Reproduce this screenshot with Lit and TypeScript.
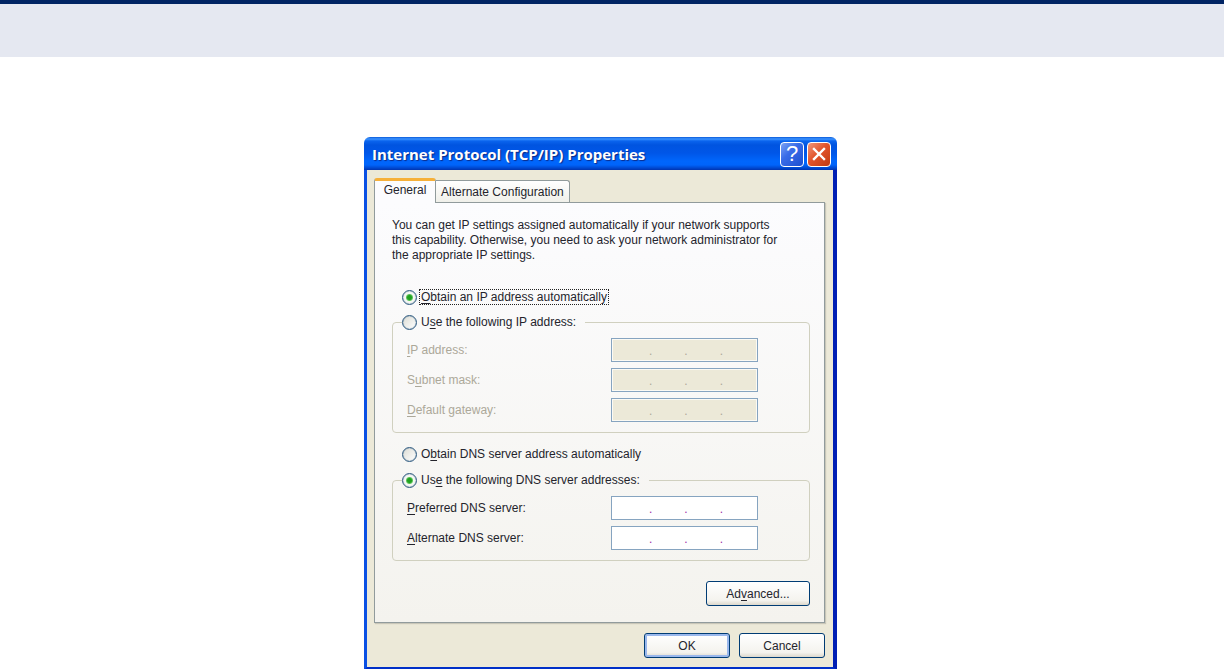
import { LitElement, html, css } from "lit";
import { customElement, property } from "lit/decorators.js";

const FONT = css`"Liberation Sans", Arial, sans-serif`;

/** Four-part address box with dots between the octets. */
@customElement("ip-field")
class IpField extends LitElement {
  @property() name = "";
  @property({ type: Boolean }) disabled = false;

  static styles = css`
    :host {
      display: block;
    }
    .box {
      box-sizing: border-box;
      display: flex;
      align-items: center;
      width: 147px;
      height: 24px;
      padding: 2px 2px 0 5px;
      border: 1px solid #86a4c0;
      background: #fff;
      color: #a030a8;
      font: 12px/16px ${FONT};
    }
    .box.off {
      background: #ece9d8;
      box-shadow: inset 0 0 0 1px #fbfaf4;
      color: #aca899;
    }
    .octet {
      flex: 1;
      min-width: 0;
      box-sizing: border-box;
      height: 16px;
      padding: 0;
      border: 0;
      background: transparent;
      font: inherit;
      color: #222;
      text-align: center;
      outline: none;
    }
  `;

  render() {
    return html`<div class="box ${this.disabled ? "off" : ""}" role="group" aria-label=${this.name}>
      ${[1, 2, 3, 4].map(
        (n) => html`${n > 1 ? html`<span>.</span>` : ""}<input
            class="octet"
            maxlength="3"
            aria-label="${this.name} ${n}"
            ?disabled=${this.disabled}
          />`
      )}
    </div>`;
  }
}

@customElement("app-root")
class AppRoot extends LitElement {
  static styles = css`
    :host {
      display: block;
      background: #fff;
      color: #24242c;
      font: 12px/16px ${FONT};
    }
    .banner {
      height: 53px;
      border-top: 4px solid #002464;
      background: #e5e8f1;
    }
    main {
      display: flex;
      justify-content: center;
      padding: 80px 23px 0 0;
    }
    .dialog {
      width: 473px;
      border-radius: 6px 6px 0 0;
      overflow: hidden;
    }
    .titlebar {
      box-sizing: border-box;
      display: flex;
      align-items: center;
      gap: 3px;
      height: 33px;
      padding: 1px 6px 0 8px;
      background: linear-gradient(
        #0a5ad8 0,
        #3c94ff 2px,
        #0a64ee 4px,
        #0054e0 8px,
        #0056e8 16px,
        #0066fc 24px,
        #0064fa 28px,
        #0048d0 31px,
        #0034b0 33px
      );
    }
    h1 {
      flex: 1;
      margin: 0;
      color: #fff;
      font: bold 15px/20px "Open Sans", "Noto Sans", sans-serif;
      text-shadow: 1px 1px 1px #0a2a88;
    }
    .cap {
      box-sizing: border-box;
      display: grid;
      place-items: center;
      width: 24px;
      height: 25px;
      padding: 0;
      border: 1px solid #fff;
      border-radius: 4px;
      color: #fff;
      font: 22px/22px ${FONT};
      background: linear-gradient(135deg, #7ba2f4, #3a6ce8 40%, #1c4fd0);
    }
    .cap.close {
      background: linear-gradient(135deg, #f0977c, #e2542c 45%, #c23a10);
    }
    .body {
      padding: 8px 8px 9px 7px;
      border: solid #0a50e4;
      border-width: 0 4px 3px 3px;
      border-right-color: #001fb4;
      border-bottom-color: #0030c8;
      background: #ece9d8;
    }
    .tabs {
      display: flex;
      align-items: flex-end;
      height: 24px;
    }
    .tab {
      box-sizing: border-box;
      height: 22px;
      padding: 0 5px;
      border: 1px solid #919b9c;
      border-bottom: 0;
      border-left: 0;
      border-radius: 0 3px 0 0;
      background: linear-gradient(#fff, #f0f0ea);
      color: inherit;
      font: inherit;
    }
    .tab.active {
      z-index: 1;
      width: 62px;
      height: 25px;
      margin-bottom: -1px;
      padding: 0 0 5px;
      border-left: 1px solid #919b9c;
      border-top: 3px solid #f6b03a;
      border-radius: 3px 3px 0 0;
      background: #fcfcfe;
    }
    .panel {
      padding: 15px 14px 16px 17px;
      border: 1px solid #919b9c;
      box-shadow: 1px 1px 1px #c8c6b8;
      background: linear-gradient(#fcfcfe, #f4f3ee);
    }
    .intro {
      margin: 0 0 26px;
      line-height: 15px;
    }
    .choice {
      display: flex;
      align-items: center;
      gap: 3px;
      height: 16px;
    }
    .loose {
      padding-left: 10px;
    }
    .choice label {
      padding: 0 1px;
    }
    .choice label.focused {
      line-height: 14px;
      outline: 1px dotted #222;
    }
    input[type="radio"] {
      appearance: none;
      box-sizing: border-box;
      width: 15px;
      height: 15px;
      margin: 0;
      border: 1px solid #2e5a80;
      border-radius: 50%;
      background: linear-gradient(135deg, #dcdcd4, #fff);
      box-shadow: inset 0 0 1px #2e5a80;
    }
    input[type="radio"]:checked {
      background: radial-gradient(circle, #21a121 0 2px, #5cc45a 3px, #f6f8f4 4px);
    }
    fieldset {
      min-width: 0;
      margin: 0;
      padding: 8px 9px 10px;
      border: 1px solid #d0d0bf;
      border-radius: 4px;
    }
    .first {
      margin: 9px 0 13px;
    }
    .second {
      margin: 10px 0 20px;
    }
    legend {
      padding: 0 8px 0 0;
    }
    .fields {
      display: grid;
      grid-template-columns: 204px 147px;
      row-gap: 6px;
      align-items: center;
      padding-left: 5px;
      grid-auto-rows: 24px;
    }
    .off {
      color: #aca899;
    }
    u {
      text-underline-offset: 2px;
    }
    .actions {
      display: flex;
      justify-content: flex-end;
      gap: 9px;
    }
    .push {
      box-sizing: border-box;
      min-width: 86px;
      height: 25px;
      padding: 0 17px;
      border: 1px solid #003c74;
      border-radius: 3px;
      background: linear-gradient(#fff, #f4f3ee 80%, #dcd8cc);
      color: inherit;
      font: inherit;
    }
    .wide {
      min-width: 104px;
    }
    .default {
      box-shadow: inset 0 0 0 2px #9ab8ec;
    }
    .footer {
      margin-top: 10px;
    }
  `;

  render() {
    return html`
      <header class="banner"></header>
      <main>
        <section class="dialog" role="dialog" aria-labelledby="title">
          <div class="titlebar">
            <h1 id="title">Internet Protocol (TCP/IP) Properties</h1>
            <button class="cap" aria-label="Help">?</button>
            <button class="cap close" aria-label="Close">
              <svg width="14" height="14" viewBox="0 0 14 14" fill="none" stroke="#fff" stroke-width="2.4" stroke-linecap="square">
                <path d="M2 2 12 12M12 2 2 12" />
              </svg>
            </button>
          </div>
          <div class="body">
            <div class="tabs" role="tablist">
              <button class="tab active" role="tab" aria-selected="true">General</button>
              <button class="tab" role="tab" aria-selected="false">Alternate Configuration</button>
            </div>
            <div class="panel" role="tabpanel">
              <p class="intro">
                You can get IP settings assigned automatically if your network supports<br />
                this capability. Otherwise, you need to ask your network administrator for<br />
                the appropriate IP settings.
              </p>
              <div class="choice loose">
                <input type="radio" name="ip" id="ip-auto" checked />
                <label class="focused" for="ip-auto"><u>O</u>btain an IP address automatically</label>
              </div>
              <fieldset class="first">
                <legend>
                  <div class="choice">
                    <input type="radio" name="ip" id="ip-manual" />
                    <label for="ip-manual">U<u>s</u>e the following IP address:</label>
                  </div>
                </legend>
                <div class="fields off">
                  <span><u>I</u>P address:</span>
                  <ip-field name="IP address" disabled></ip-field>
                  <span>S<u>u</u>bnet mask:</span>
                  <ip-field name="Subnet mask" disabled></ip-field>
                  <span><u>D</u>efault gateway:</span>
                  <ip-field name="Default gateway" disabled></ip-field>
                </div>
              </fieldset>
              <div class="choice loose">
                <input type="radio" name="dns" id="dns-auto" />
                <label for="dns-auto">O<u>b</u>tain DNS server address automatically</label>
              </div>
              <fieldset class="second">
                <legend>
                  <div class="choice">
                    <input type="radio" name="dns" id="dns-manual" checked />
                    <label for="dns-manual">Us<u>e</u> the following DNS server addresses:</label>
                  </div>
                </legend>
                <div class="fields">
                  <span><u>P</u>referred DNS server:</span>
                  <ip-field name="Preferred DNS server"></ip-field>
                  <span><u>A</u>lternate DNS server:</span>
                  <ip-field name="Alternate DNS server"></ip-field>
                </div>
              </fieldset>
              <div class="actions">
                <button class="push wide">Ad<u>v</u>anced...</button>
              </div>
            </div>
            <div class="actions footer">
              <button class="push default">OK</button>
              <button class="push">Cancel</button>
            </div>
          </div>
        </section>
      </main>
    `;
  }
}
